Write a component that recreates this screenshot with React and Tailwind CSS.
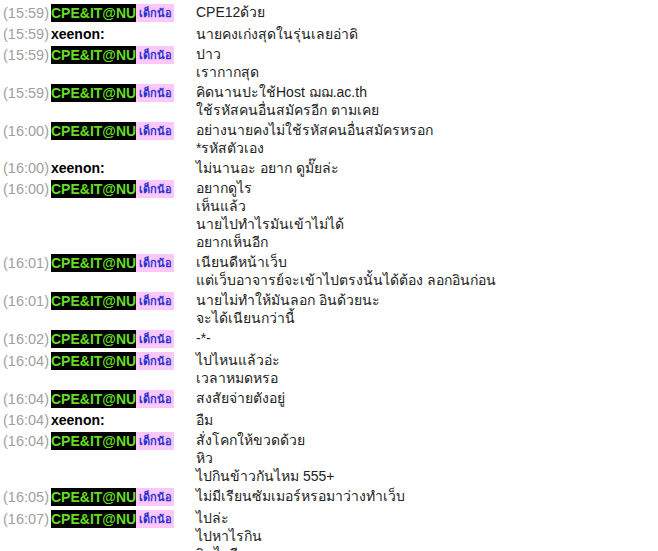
const rows = [
  { t: '15:59', who: 'cpe', lines: ['CPE12ด้วย'] },
  { t: '15:59', who: 'xeenon', lines: ['นายคงเก่งสุดในรุ่นเลยอ่าดิ'] },
  { t: '15:59', who: 'cpe', lines: ['ปาว', 'เรากากสุด'] },
  { t: '15:59', who: 'cpe', lines: ['คิดนานปะใช้Host ฌฌ.ac.th', 'ใช้รหัสคนอื่นสมัครอีก ตามเคย'] },
  { t: '16:00', who: 'cpe', lines: ['อย่างนายคงไม่ใช้รหัสคนอื่นสมัครหรอก', '*รหัสตัวเอง'] },
  { t: '16:00', who: 'xeenon', lines: ['ไม่นานอะ อยาก ดูมั๊ยล่ะ'] },
  { t: '16:00', who: 'cpe', lines: ['อยากดูไร', 'เห็นแล้ว', 'นายไปทำไรมันเข้าไม่ได้', 'อยากเห็นอีก'] },
  { t: '16:01', who: 'cpe', lines: ['เนียนดีหน้าเว็บ', 'แต่เว็บอาจารย์จะเข้าไปตรงนั้นได้ต้อง ลอกอินก่อน'] },
  { t: '16:01', who: 'cpe', lines: ['นายไม่ทำให้มันลอก อินด้วยนะ', 'จะได้เนียนกว่านี้'] },
  { t: '16:02', who: 'cpe', lines: ['-*-'] },
  { t: '16:04', who: 'cpe', lines: ['ไปไหนแล้วอ่ะ', 'เวลาหมดหรอ'] },
  { t: '16:04', who: 'cpe', lines: ['สงสัยจ่ายตังอยู่'] },
  { t: '16:04', who: 'xeenon', lines: ['อืม'] },
  { t: '16:04', who: 'cpe', lines: ['สั่งโคกให้ขวดด้วย', 'หิว', 'ไปกินข้าวกันไหม 555+'] },
  { t: '16:05', who: 'cpe', lines: ['ไม่มีเรียนซัมเมอร์หรอมาว่างทำเว็บ'] },
  { t: '16:07', who: 'cpe', lines: ['ไปล่ะ', 'ไปหาไรกิน', 'กินไรดี'] },
]

function Sender({ who }) {
  if (who === 'xeenon') {
    return <span className="ml-[2px] font-bold text-black">xeenon:</span>
  }
  return (
    <span className="ml-[2px] flex items-center">
      <span className="bg-black font-bold text-[#66dd22] leading-[18px]">CPE&amp;IT@NU</span>
      <span className="flex h-[18px] w-[38px] items-center justify-center bg-[#fcc8fc] text-[11px] font-bold text-[#2a33cc]">
        เด็กน้อ
      </span>
    </span>
  )
}

export default function App() {
  return (
    <div className="min-h-screen bg-white pt-[2px] font-['Liberation_Sans',Tahoma,'Noto_Sans',sans-serif] text-[14px]">
      {rows.map((r, i) => (
        <div key={i} className="flex items-start py-px">
          {/* left cell: time + sender */}
          <div className={`flex w-[196px] shrink-0 items-center pl-[3px] ${r.who === 'cpe' ? 'my-px h-[18px]' : 'h-[18px]'}`}>
            <span className="text-[14.5px] text-[#a0a0a0] leading-[18px]">({r.t})</span>
            <Sender who={r.who} />
          </div>
          {/* message */}
          <div className="flex-1 text-[#222]">
            {r.lines.map((l, j) => (
              <div key={j} className="leading-[18px]">{l}</div>
            ))}
          </div>
        </div>
      ))}
    </div>
  )
}
